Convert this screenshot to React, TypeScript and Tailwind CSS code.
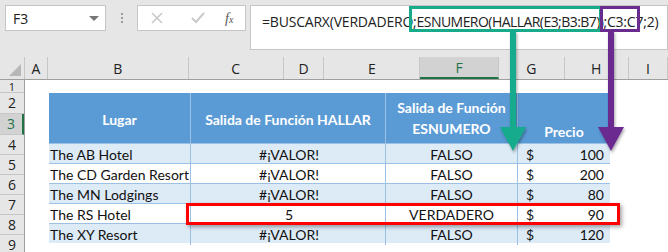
import React from 'react';

const cols = [
  { id: 'A', w: 24 },
  { id: 'B', w: 143 },
  { id: 'C', w: 97 },
  { id: 'D', w: 41 },
  { id: 'E', w: 98 },
  { id: 'F', w: 80, selected: true },
  { id: 'G', w: 67 },
  { id: 'H', w: 65 },
  { id: 'I', w: 40 },
];

const rowHeights = [13, 21, 21, 20, 20, 20, 20, 20, 20];

const rows = [
  { lugar: 'The AB Hotel', hallar: '#¡VALOR!', esnum: 'FALSO', precio: '100' },
  { lugar: 'The CD Garden Resort', hallar: '#¡VALOR!', esnum: 'FALSO', precio: '200' },
  { lugar: 'The MN Lodgings', hallar: '#¡VALOR!', esnum: 'FALSO', precio: '80' },
  { lugar: 'The RS Hotel', hallar: '5', esnum: 'VERDADERO', precio: '90' },
  { lugar: 'The XY Resort', hallar: '#¡VALOR!', esnum: 'FALSO', precio: '120' },
];

const uiFont = { fontFamily: '"Open Sans", "Noto Sans", sans-serif' };
const cellFont = { fontFamily: 'Lato, "Liberation Sans", sans-serif' };

function FormulaBar() {
  return (
    <div className="flex h-[57px] items-start bg-[#e6e6e6] pt-[5px]" style={uiFont}>
      <div className="ml-[5px] flex h-[26px] w-[101px] items-center justify-between border border-[#c6c6c6] bg-white pl-[7px] pr-[6px] text-[14px] text-[#222]">
        <span>F3</span>
        <span className="h-0 w-0 border-x-[5px] border-t-[5px] border-x-transparent border-t-[#777]" />
      </div>
      <div className="flex h-[26px] w-[31px] flex-col items-center justify-center gap-[2px]">
        <span className="h-[2px] w-[2px] bg-[#9a9a9a]" />
        <span className="h-[2px] w-[2px] bg-[#9a9a9a]" />
        <span className="h-[2px] w-[2px] bg-[#9a9a9a]" />
      </div>
      <div className="flex h-[26px] w-[109px] items-center border border-[#c6c6c6] bg-white">
        <svg width="36" height="24" viewBox="0 0 36 24" className="ml-[6px]">
          <path d="M8 7 L18 17 M18 7 L8 17" stroke="#c9c9c9" strokeWidth="1.6" fill="none" />
        </svg>
        <svg width="36" height="24" viewBox="0 0 36 24">
          <path d="M12 12 L16 16 L24 7" stroke="#c9c9c9" strokeWidth="2" fill="none" />
        </svg>
        <span className="ml-[9px] text-[14px] italic text-[#555]" style={{ fontFamily: '"Liberation Serif", serif' }}>
          f<span className="text-[10px]">x</span>
        </span>
      </div>
      <div className="ml-[4px] h-[45px] flex-1 border border-[#c6c6c6] bg-white pl-[11px] pt-[5px] text-[14px] text-[#222]">
        <span className="whitespace-nowrap">
          <span className="tracking-[-0.2px]">=BUSCARX(VERDADERO;</span>
          <span className="tracking-[-0.55px]">ESNUMERO(HALLAR(E3;B3:B7))</span>
          <span className="tracking-[-0.2px]">;C3:C7;2)</span>
        </span>
      </div>
    </div>
  );
}

function ColumnHeaders() {
  return (
    <div className="flex h-[23px] border-b border-[#9f9f9f] bg-[#e6e6e6] text-[14px] text-[#222]" style={uiFont}>
      <div className="relative w-[25px] border-r border-[#c6c6c6]">
        <span className="absolute bottom-[3px] right-[3px] h-0 w-0 border-b-[12px] border-l-[12px] border-b-[#b7b7b7] border-l-transparent" />
      </div>
      {cols.map((c) => (
        <div
          key={c.id}
          className={
            c.selected
              ? 'flex items-center justify-center border-b-2 border-r border-b-[#217346] border-r-[#c6c6c6] bg-[#d2d2d2] text-[#217346]'
              : 'flex items-center justify-center border-r border-[#c6c6c6]'
          }
          style={{ width: c.w }}
        >
          {c.id}
        </div>
      ))}
    </div>
  );
}

function RowHeaders() {
  return (
    <div className="flex w-[25px] flex-col border-r border-[#9f9f9f] bg-[#e6e6e6] text-[14px] leading-none text-[#222]" style={uiFont}>
      {rowHeights.map((h, i) => (
        <div
          key={i}
          className={
            i === 2
              ? 'flex items-center justify-center overflow-hidden border-b border-r-2 border-b-[#c6c6c6] border-r-[#217346] bg-[#d2d2d2] text-[#217346]'
              : i === 0
                ? 'flex items-center justify-center overflow-hidden border-b border-[#c6c6c6] text-[11px]'
                : 'flex items-center justify-center overflow-hidden border-b border-[#c6c6c6]'
          }
          style={{ height: h }}
        >
          {i + 1}
        </div>
      ))}
    </div>
  );
}

function Table() {
  return (
    <div className="ml-[24px] mt-[13px] w-[561px] text-[14px] text-[#111]" style={cellFont}>
      <div className="grid h-[50px] grid-cols-[142px_195px_132px_92px] bg-[#5b9bd5] font-bold text-white">
        <div className="flex items-center justify-center border-r border-[#9bc2e6] pt-[3px]">Lugar</div>
        <div className="flex items-center justify-center border-r border-[#9bc2e6] pt-[3px]">Salida de Función HALLAR</div>
        <div className="flex flex-col items-center justify-center border-r border-[#9bc2e6] leading-[21px]">
          <span>Salida de Función</span>
          <span>ESNUMERO</span>
        </div>
        <div className="flex items-end justify-center pb-[1px]">Precio</div>
      </div>
      {rows.map((r, i) => (
        <div
          key={r.lugar}
          className={
            'grid h-[20px] grid-cols-[142px_195px_132px_92px] border-t border-[#9bc2e6] ' +
            (i % 2 === 0 ? 'bg-[#ddebf7]' : 'bg-white')
          }
        >
          <div className="flex items-center border-r border-[#9bc2e6] pl-[1px]">{r.lugar}</div>
          <div className="flex items-center justify-center border-r border-[#9bc2e6] pl-[2px]">{r.hallar}</div>
          <div className="flex items-center justify-center border-r border-[#9bc2e6]">{r.esnum}</div>
          <div className="flex items-center justify-between pl-[8px] pr-[6px]">
            <span>$</span>
            <span>{r.precio}</span>
          </div>
        </div>
      ))}
    </div>
  );
}

function Arrow({ x, color }: { x: number; color: string }) {
  return (
    <svg className="absolute left-0 top-0" width="668" height="252" style={{ pointerEvents: 'none' }}>
      <defs>
        <filter id={'sh' + x} x="-50%" y="-10%" width="200%" height="130%">
          <feDropShadow dx="1" dy="2" stdDeviation="1.5" floodOpacity="0.35" />
        </filter>
      </defs>
      <g filter={`url(#sh${x})`}>
        <rect x={x - 3} y={31} width={6} height={98} fill={color} />
        <polygon points={`${x - 13},127 ${x + 13},127 ${x},151`} fill={color} />
      </g>
    </svg>
  );
}

export default function App() {
  return (
    <div className="relative h-[252px] w-[668px] overflow-hidden bg-white">
      <FormulaBar />
      <ColumnHeaders />
      <div className="flex">
        <RowHeaders />
        <div className="flex-1">
          <Table />
        </div>
      </div>
      {/* highlights over the formula text */}
      <div className="absolute left-[409px] top-[6px] h-[26px] w-[193px] border-[3px] border-[#17ab8c]" />
      <div className="absolute left-[600px] top-[6px] h-[26px] w-[40px] border-[3px] border-[#6a2b8f]" />
      <Arrow x={513} color="#17ab8c" />
      <Arrow x={611} color="#6a2b8f" />
      {/* red box round the RS Hotel row */}
      <div className="absolute left-[186px] top-[203px] h-[22px] w-[434px] border-[3px] border-[#ff0000] shadow-[2px_2px_4px_rgba(0,0,0,0.35)]" />
    </div>
  );
}
